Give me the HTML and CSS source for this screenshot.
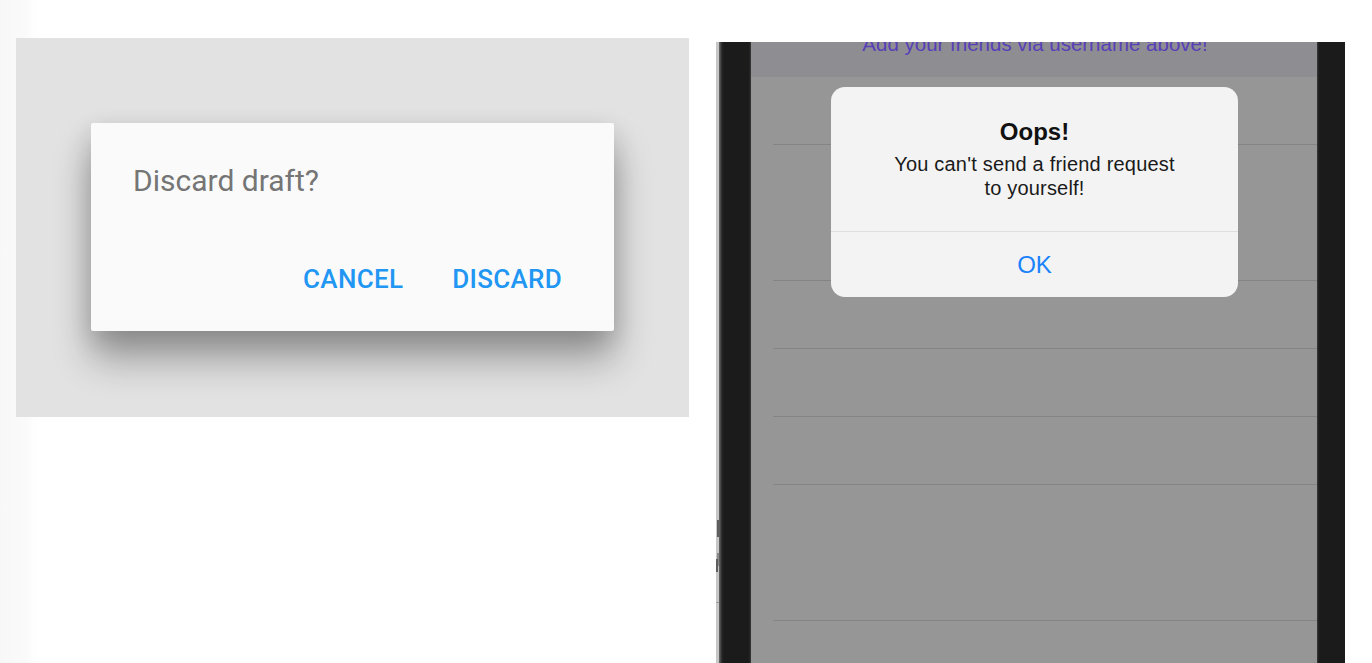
FILE: index.html
```html
<!DOCTYPE html>
<html lang="en">
<head>
<meta charset="utf-8">
<title>Dialogs</title>
<link rel="stylesheet" href="styles.css">
</head>
<body>
<main class="page">
  <section class="android">
    <div class="android-stage">
      <div class="md-dialog">
        <p class="md-title">Discard draft?</p>
        <div class="md-actions">
          <button class="md-btn">CANCEL</button>
          <button class="md-btn">DISCARD</button>
        </div>
      </div>
    </div>
  </section>
  <section class="ios">
    <div class="phone-edge">
      <span class="frag frag-l"></span>
      <span class="frag frag-r"></span>
      <span class="frag-line"></span>
    </div>
    <div class="bezel bezel-left"></div>
    <div class="screen">
      <div class="header"><span class="header-text">Add your friends via username above!</span></div>
      <ul class="rows">
        <li class="row line"></li>
        <li class="row"></li>
        <li class="row line"></li>
        <li class="row line"></li>
        <li class="row line"></li>
        <li class="row line"></li>
        <li class="row"></li>
        <li class="row line"></li>
        <li class="row"></li>
      </ul>
      <div class="alert">
        <div class="alert-body">
          <h2 class="alert-title">Oops!</h2>
          <p class="alert-msg">You can't send a friend request<br>to yourself!</p>
        </div>
        <button class="alert-btn">OK</button>
      </div>
    </div>
    <div class="bezel bezel-right"></div>
  </section>
</main>
</body>
</html>
```

FILE: styles.css
```css
* { box-sizing: border-box; }
html, body { margin: 0; padding: 0; }
body {
  width: 1372px;
  height: 663px;
  overflow: hidden;
  background: linear-gradient(to right, #f8f8f8 0, #fafafa 26px, #fefefe 34px, #ffffff 40px);
}
.page {
  display: flex;
  height: 663px;
}

/* ---------- Android ---------- */
.android {
  width: 716px;
  padding: 38px 0 0 16px;
}
.android-stage {
  width: 673px;
  height: 379px;
  background: #e2e2e2;
  display: flex;
  align-items: center;
  justify-content: center;
  padding-bottom: 1px;
}
.md-dialog {
  width: 523px;
  height: 208px;
  background: #fafafa;
  border-radius: 2px;
  box-shadow: 0 28px 38px rgba(0,0,0,0.32), 0 8px 26px rgba(0,0,0,0.14);
  padding: 41px 52px 0 42px;
  display: flex;
  flex-direction: column;
  font-family: Roboto, "Liberation Sans", sans-serif;
}
.md-title {
  margin: 0;
  font-size: 30px;
  line-height: 34px;
  color: #757575;
  font-weight: 400;
}
.md-actions {
  display: flex;
  justify-content: flex-end;
  gap: 49px;
  margin-top: 65px;
}
.md-btn {
  border: 0;
  background: none;
  padding: 0;
  font-family: Roboto, "Liberation Sans", sans-serif;
  font-weight: 500;
  font-size: 26px;
  line-height: 32px;
  letter-spacing: 0.3px;
  color: #2196f3;
}

/* ---------- iOS ---------- */
.ios {
  display: flex;
  padding-top: 42px;
  height: 663px;
}
.phone-edge {
  width: 3px;
  background: #c6c6c6;
  display: flex;
  flex-direction: column;
  align-items: flex-start;
  padding-top: 478px;
}
.frag {
  display: block;
  background: #5e5e5e;
}
.frag-l {
  width: 2px;
  height: 17px;
  margin-left: 1px;
}
.frag-r {
  width: 2px;
  height: 13px;
  margin-top: 22px;
  margin-left: 0;
  box-shadow: 1px -6px 0 -0px #8a8a8a;
}
.frag-line {
  display: block;
  width: 3px;
  height: 1px;
  background: #9a9a9a;
  margin-top: 30px;
}
.bezel {
  background: #1b1b1b;
}
.bezel-left {
  width: 32px;
  background: linear-gradient(to right, #6a6a6a 0, #262626 3px, #1b1b1b 5px, #1b1b1b 30px, #3a3a3a 32px);
}
.bezel-right {
  width: 28px;
  background: linear-gradient(to right, #3a3a3a 0, #1b1b1b 2px);
}
.screen {
  position: relative;
  width: 566px;
  background: #969696;
  overflow: hidden;
}
.header {
  height: 35px;
  background: #8e8e92;
  display: flex;
  justify-content: center;
  overflow: hidden;
}
.header-text {
  font-family: "Liberation Sans", sans-serif;
  font-size: 20.5px;
  line-height: 20px;
  margin-top: -8px;
  color: #5840b8;
  padding-left: 2px;
}
.rows {
  list-style: none;
  margin: 0;
  padding: 0 0 0 22px;
}
.row {
  height: 68px;
}
.row.line {
  border-bottom: 1px solid #848484;
}

.alert {
  position: absolute;
  top: 45px;
  left: 80px;
  width: 407px;
  height: 210px;
  background: #f3f3f3;
  border-radius: 14px;
  display: flex;
  flex-direction: column;
  font-family: "Liberation Sans", sans-serif;
  text-align: center;
}
.alert-body {
  padding: 31px 10px 0;
  height: 145px;
  border-bottom: 1px solid #dedede;
}
.alert-title {
  margin: 0;
  font-size: 24px;
  line-height: 28px;
  font-weight: 700;
  color: #111;
}
.alert-msg {
  margin: 6px 0 0;
  font-size: 20px;
  line-height: 24px;
  letter-spacing: 0.2px;
  color: #1a1a1a;
}
.alert-btn {
  border: 0;
  background: none;
  padding: 0;
  height: 64px;
  font-family: "Liberation Sans", sans-serif;
  font-size: 24px;
  line-height: 66px;
  color: #1a82fb;
}
```
